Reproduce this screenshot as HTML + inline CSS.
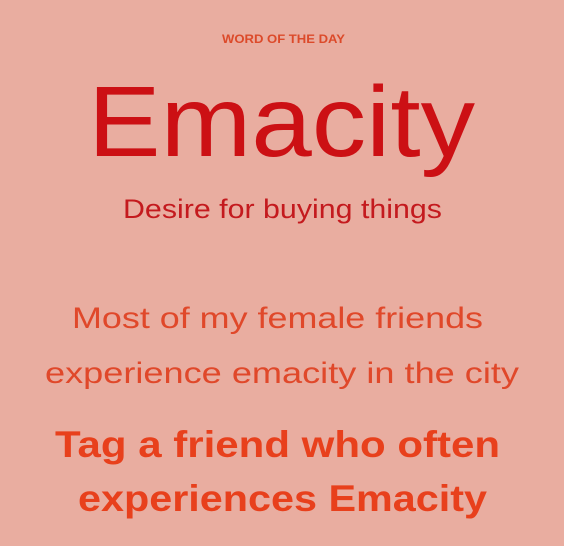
<!DOCTYPE html>
<html><head><meta charset="utf-8"><style>
html,body{margin:0;padding:0;background:#e9ada0;}
svg{display:block}
</style></head><body>
<svg width="564" height="546" viewBox="0 0 564 546" xmlns="http://www.w3.org/2000/svg">
<rect width="564" height="546" fill="#e9ada0"/>
<g font-family="Liberation Sans, sans-serif">
<text x="222" y="43" font-size="12" font-weight="bold" fill="#dc4a2a" textLength="123" lengthAdjust="spacingAndGlyphs">WORD OF THE DAY</text>
<text x="88" y="156" font-size="100" fill="#cc1014" textLength="387" lengthAdjust="spacingAndGlyphs">Emacity</text>
<text x="123" y="218" font-size="27" fill="#c41a1e" textLength="319" lengthAdjust="spacingAndGlyphs">Desire for buying things</text>
<text x="72" y="328" font-size="30" fill="#e0482a" textLength="411" lengthAdjust="spacingAndGlyphs">Most of my female friends</text>
<text x="45" y="383" font-size="30" fill="#e0482a" textLength="474" lengthAdjust="spacingAndGlyphs">experience emacity in the city</text>
<text x="55" y="457" font-size="37" font-weight="bold" fill="#e8401c" textLength="445" lengthAdjust="spacingAndGlyphs">Tag a friend who often</text>
<text x="78" y="511" font-size="37" font-weight="bold" fill="#e8401c" textLength="409" lengthAdjust="spacingAndGlyphs">experiences Emacity</text>
</g>
</svg>
</body></html>
